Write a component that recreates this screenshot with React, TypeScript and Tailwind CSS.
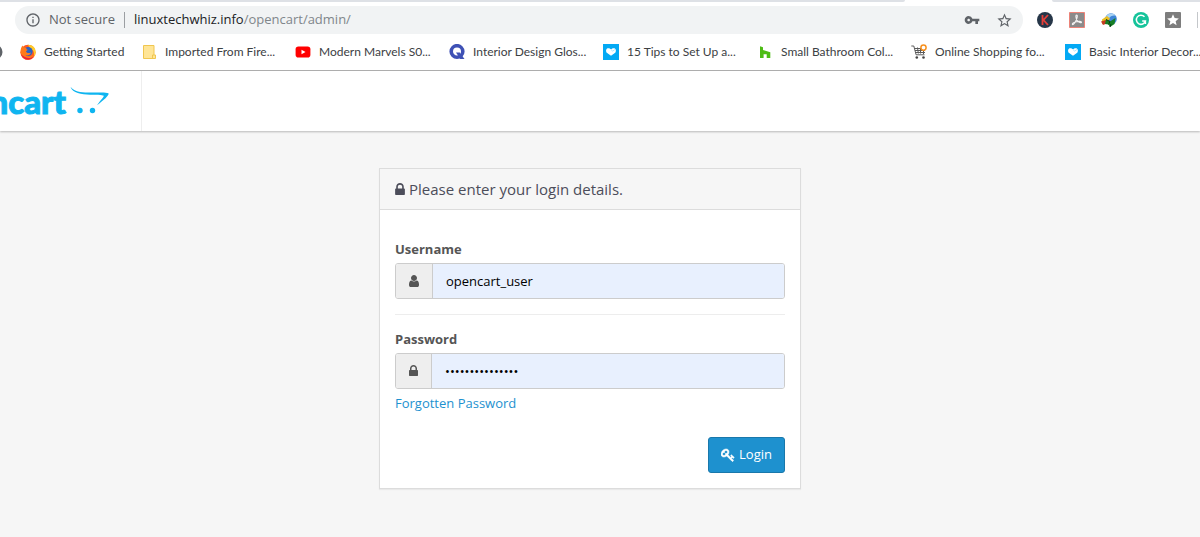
import { ReactNode } from "react";
import { MdInfoOutline, MdStar, MdStarBorder, MdVpnKey } from "react-icons/md";

interface Bookmark {
  label: string;
  icon: ReactNode;
}

function FirefoxIcon() {
  return (
    <svg viewBox="0 0 16 16" className="size-4">
      <circle cx="8" cy="8.3" r="7.6" fill="#ff5a1f" />
      <path d="M8 .8c5 0 7.8 3.400 7.700 7.500-.1 2-1 3.700-2 4.700 1-4-.2-7-3-8.500C9.500 3.500 8.500 2 8 .8Z" fill="#ffc928" />
      <circle cx="8" cy="7.500" r="4.600" fill="#2a62c4" />
      <path d="M.6 8C.5 5 1.300 3 2.500 1.500c.3 1 .8 1.500 1.500 2 1-.3 2 0 2.800.3C6 4.500 6 5.200 7.500 5.600c.3.800-.8 1.200-1.500 1.700.3 1.700 2.500 2.400 5 1.200-.7 2.700-3.500 3.500-5.700 2.600 2 2.300 6 2 8-.6C12 15 9 16 6.500 15.500 3 14.800.7 12 .6 8Z" fill="#ff7a1a" />
      <path d="M1 10c1 4 4.500 6 8 5.500 2-.3 3.800-1.500 4.800-3-3 2.200-8.800 2.500-12.800-2.500Z" fill="#e8203c" />
    </svg>
  );
}

function FolderIcon() {
  return (
    <svg viewBox="0 0 16 16" className="size-4">
      <path d="M2.500 1.500h10.500v9.500h1.500v3.500h-12Z" fill="#ffe596" stroke="#f0c64f" />
      <path d="M11.500 14v-3h1.500" fill="none" stroke="#f0c64f" />
    </svg>
  );
}

function YoutubeIcon() {
  return (
    <svg viewBox="0 0 16 16" className="size-4">
      <rect x=".6" y="2.500" width="14.800" height="11" rx="2.800" fill="#f00" />
      <path d="m6.500 5.700 4 2.300-4 2.300Z" fill="#fff" />
    </svg>
  );
}

function QIcon() {
  return (
    <svg viewBox="0 0 16 16" className="size-4">
      <circle cx="8" cy="7.500" r="5.800" fill="none" stroke="#3f51b5" strokeWidth="3.600" />
      <path d="M7 8.500h3.800L15.500 15h-4.300Z" fill="#3f51b5" />
    </svg>
  );
}

function HeartIcon() {
  return (
    <svg viewBox="0 0 16 16" className="size-4">
      <path d="M0 0h16v16H0Z" fill="#03a9f4" />
      <path d="M8 11.800 3.800 8.800C2.500 7 3 4.200 5.200 4.200c1.200 0 2 .4 2.800 1.100.8-.7 1.600-1.100 2.800-1.100 2.200 0 2.700 2.800 1.400 4.600Z" fill="#fff" />
      <path d="m8 5.600 1.700 1.500 2.100-1.500" fill="none" stroke="#8fd8fa" strokeWidth=".7" />
    </svg>
  );
}

function HouzzIcon() {
  return (
    <svg viewBox="0 0 16 16" className="size-4">
      <path d="M3 2.300 6 3.200v2.900l7.300 2.100v5.800H9.700v-3.700H6.600v3.700H3Z" fill="#4dbc15" />
    </svg>
  );
}

function CartIcon() {
  return (
    <svg viewBox="0 0 16 16" className="size-4">
      <path d="M.3 2h2.500l2.300 8.800h8.400M3.500 4.500h7M4 6.500h10M4.500 8.500h9.500M6.500 3.500l.8 6M9.500 4v5.500M12.500 7v3" fill="none" stroke="#5a5a5a" strokeWidth="1" />
      <circle cx="5.800" cy="13.500" r="1.300" fill="#444" />
      <circle cx="12.500" cy="13.500" r="1.300" fill="#444" />
      <circle cx="12.500" cy="3.600" r="2.600" fill="#fff" stroke="#f7901e" strokeWidth="1.500" />
    </svg>
  );
}

const bookmarks: Bookmark[] = [
  { label: "Imported From Fire...", icon: <FolderIcon /> },
  { label: "Modern Marvels S0...", icon: <YoutubeIcon /> },
  { label: "Interior Design Glos...", icon: <QIcon /> },
  { label: "15 Tips to Set Up a...", icon: <HeartIcon /> },
  { label: "Small Bathroom Col...", icon: <HouzzIcon /> },
  { label: "Online Shopping fo...", icon: <CartIcon /> },
  { label: "Basic Interior Decor...", icon: <HeartIcon /> },
];

function Extensions() {
  return (
    <div className="flex shrink-0 items-center gap-4">
      <button type="button" aria-label="Keywords extension">
        <svg viewBox="0 0 16 16" className="size-4">
          <circle cx="8" cy="8" r="8" fill="#263648" />
          <path d="M5.500 3v10M11 3 6.500 8l4.500 5" fill="none" stroke="#e5403a" strokeWidth="1.800" />
        </svg>
      </button>
      <button type="button" aria-label="PDF extension">
        <svg viewBox="0 0 16 16" className="size-4">
          <path d="M.5.5h15v15H.5Z" fill="#8b8b8b" stroke="#ec8378" />
          <path d="M7.500 3c1.500 0 .6 3-.5 5.500-1 2.200-2.500 4.500-3.500 4-.8-.8 1.500-2.300 4-2.800 2.300-.5 5-.5 5 .5s-2.800.3-4.300-1.500C6.800 6.500 6.500 3 7.500 3Z" fill="none" stroke="#f3f3f3" strokeWidth="1.100" />
        </svg>
      </button>
      <button type="button" aria-label="Download manager">
        <svg viewBox="0 0 16 16" className="size-4">
          <circle cx="10" cy="7" r="5.800" fill="#3f86d8" />
          <path d="M5 4.500C7 1 12 .5 14.500 3.500 12 3 9 4 7.500 7Z" fill="#a9d2f3" />
          <path d="M1 7.500 6 4l3 2.500-3 4.500-5 1Z" fill="#e9bd22" />
          <path d="M0 9.500 5 8l2 3-5 2Z" fill="#c43c24" />
          <path d="m5 7.500 4 2L14.500 6l-1 6-4.500 3-1.500-2.500L4 12Z" fill="#167f24" />
          <path d="m5 7.500 4 2-1.500 3M9 15l1-3" fill="none" stroke="#083d12" />
        </svg>
      </button>
      <button type="button" aria-label="Grammar checker">
        <svg viewBox="0 0 16 16" className="size-4">
          <circle cx="8" cy="8" r="8" fill="#15c39a" />
          <path d="M11.500 4.800A4.600 4.600 0 1 0 12.400 9H9.200M12.400 9v3" fill="none" stroke="#fff" strokeWidth="1.500" />
        </svg>
      </button>
      <button type="button" aria-label="Favourites" className="flex size-4 items-center justify-center rounded-[1px] bg-[#7d7d7d] text-white">
        <MdStar size={14} />
      </button>
      <span className="h-4 w-px bg-[#c4c7ca]" />
    </div>
  );
}

function BrowserBar() {
  return (
    <div className="overflow-hidden border-b border-[#b0b0b0] bg-white">
      {/* Bottom edge of the tab strip */}
      <div className="flex h-[2px] justify-between">
        <span className="w-[905px] rounded-br-xs bg-[#dee1e6]" />
        <span className="w-[148px] rounded-bl-xs bg-[#dee1e6]" />
      </div>

      <div className="flex items-center gap-[14px] pt-1 pr-[2px] pl-[15px]">
        <div className="flex h-7 min-w-0 flex-1 items-center rounded-full bg-[#f1f3f4] px-[10px] text-[#5f6368]">
          <MdInfoOutline size={16} className="shrink-0" />
          <span className="ml-2 text-[13px] whitespace-nowrap">Not secure</span>
          <span className="mx-[9px] h-4 w-px bg-[#9b9ea2]" />
          <span className="flex-1 text-[13px] whitespace-nowrap text-[#80868b]">
            <span className="text-[#202124]">linuxtechwhiz.info</span>/opencart/admin/
          </span>
          <button type="button" aria-label="Saved passwords">
            <MdVpnKey size={16} />
          </button>
          <button type="button" aria-label="Bookmark this page" className="ml-4">
            <MdStarBorder size={17} />
          </button>
        </div>
        <Extensions />
      </div>

      <nav className="flex h-9 items-center font-['Lato',sans-serif] text-[12px] text-[#3c4043]">
        <svg viewBox="0 0 3 16" className="h-4 w-[3px] shrink-0">
          <circle cx="-5" cy="8" r="7.500" fill="#5f6368" />
        </svg>
        <a href="#" className="ml-[17px] flex w-[121px] shrink-0 items-center gap-2 whitespace-nowrap">
          <FirefoxIcon />
          Getting Started
        </a>
        {bookmarks.map((bookmark) => (
          <a key={bookmark.label} href="#" className="flex w-[154px] shrink-0 items-center gap-2 whitespace-nowrap">
            {bookmark.icon}
            {bookmark.label}
          </a>
        ))}
      </nav>
    </div>
  );
}

function LockIcon({ className }: { className: string }) {
  return (
    <svg viewBox="320 128 1152 1536" fill="currentColor" className={className}>
      <path d="M640 768h512v-192q0-106-75-181t-181-75-181 75-75 181v192zm832 96v576q0 40-28 68t-68 28h-960q-40 0-68-28t-28-68v-576q0-40 28-68t68-28h32v-192q0-184 132-316t316-132 316 132 132 316v192h32q40 0 68 28t28 68z" />
    </svg>
  );
}

function UserIcon() {
  return (
    <svg viewBox="256 128 1280 1536" fill="currentColor" className="h-3 w-[10px]">
      <path d="M1536 1399q0 109-62.5 187t-150.500 78h-854q-88 0-150.500-78t-62.500-187q0-85 8.500-160.500t31.500-152 58.500-131 94-89 134.500-34.500q131 128 313 128t313-128q76 0 134.500 34.500t94 89 58.500 131 31.500 152 8.500 160.500zm-256-887q0 159-112.500 271.500t-271.500 112.500-271.500-112.500-112.500-271.500 112.500-271.500 271.500-112.500 271.500 112.500 112.500 271.500z" />
    </svg>
  );
}

function KeyIcon() {
  return (
    <svg viewBox="0 0 1792 1792" fill="currentColor" stroke="currentColor" strokeWidth="70" className="size-[14px]">
      <path d="M832 512q0-80-56-136t-136-56-136 56-56 136q0 42 19 83-41-19-83-19-80 0-136 56t-56 136 56 136 136 56 136-56 56-136q0-42-19-83 41 19 83 19 80 0 136-56t56-136zm851 704q0 17-49 66t-66 49q-9 0-28.500-16t-36.500-33-38.500-40-24.500-26l-96 96 220 220q28 28 28 68 0 42-39 81t-81 39q-40 0-68-28l-671-671q-176 131-365 131-163 0-265.500-102.500t-102.500-265.500q0-160 95-313t248-248 313-95q163 0 265.500 102.500t102.500 265.500q0 189-131 365l355 355 96-96q-3-3-26-24.500t-40-38.500-33-36.500-16-28.500q0-17 49-66t66-49q13 0 23 10 6 6 46 44.500t82 79.500 86.500 86 73 78 28.500 41z" />
    </svg>
  );
}

function Header() {
  return (
    <header className="flex h-[60px] bg-white shadow-[0_1px_2px_rgba(0,0,0,0.25)]">
      <a href="#" aria-label="opencart" className="flex w-[142px] items-center justify-end overflow-hidden border-r border-[#eeeeee] pr-[31px] text-[#0fb5f0]">
        <span className="font-['Lato',sans-serif] text-[33px] leading-[56px] font-black [-webkit-text-stroke:1px_#0fb5f0]">opencart</span>
        <svg viewBox="0 0 40 30" className="ml-1 h-[30px] w-10 shrink-0" fill="currentColor">
          <path d="M.5.800C5.500 7 13 6.700 24 6.500c6 0 12-.5 14.500.8 1 2-5 7-11.500 12 3.500-5 7-8.500 6.800-9.500-1.800-1-7.500-.8-13.800-1C11.500 8.400 2.500 7.500.5.800Z" />
          <circle cx="10" cy="24.500" r="2.700" />
          <circle cx="22.500" cy="24.500" r="2.700" />
        </svg>
      </a>
    </header>
  );
}

function LoginPanel() {
  return (
    <section className="w-full max-w-[422px] border border-[#dcdcdc] bg-white shadow-[0_1px_1px_rgba(0,0,0,0.05)]">
      <h1 className="flex h-[41px] items-center gap-1 border-b border-[#dcdcdc] bg-[#f6f6f6] px-[15px] text-[15px] text-[#4c4d5a]">
        <LockIcon className="h-[13px] w-[10px]" />
        Please enter your login details.
      </h1>
      <form className="flex flex-col px-[15px] pt-[29px] pb-[15px]" onSubmit={(e) => e.preventDefault()}>
        <label htmlFor="username" className="mb-1 leading-5 font-bold">Username</label>
        <div className="flex h-9 overflow-hidden rounded-[3px] border border-[#cccccc]">
          <span className="flex w-[37px] items-center justify-center border-r border-[#cccccc] bg-[#eeeeee]">
            <UserIcon />
          </span>
          <input id="username" type="text" defaultValue="opencart_user" className="min-w-0 flex-1 bg-[#e8f0fe] px-[13px] pt-px text-black outline-none" />
        </div>

        <hr className="mt-[15px] mb-[14px] border-[#ededed]" />

        <label htmlFor="password" className="mb-1 leading-5 font-bold">Password</label>
        <div className="flex h-9 overflow-hidden rounded-[3px] border border-[#cccccc]">
          <span className="flex w-9 items-center justify-center border-r border-[#cccccc] bg-[#eeeeee]">
            <LockIcon className="h-3 w-[9px]" />
          </span>
          <input id="password" type="password" defaultValue="opencartadmin15" className="min-w-0 flex-1 bg-[#e8f0fe] px-[13px] pt-px text-black outline-none" />
        </div>
        <a href="#" className="mt-1 self-start leading-5 text-[#1e91cf]">Forgotten Password</a>

        <button type="submit" className="mt-6 flex h-9 items-center gap-1 self-end rounded-[3px] border border-[#1978ab] bg-[#1e91cf] px-3 text-white">
          <KeyIcon />
          Login
        </button>
      </form>
    </section>
  );
}

export default function App() {
  return (
    <div className="flex min-h-screen flex-col bg-[#f6f6f6] font-['Open_Sans',sans-serif] text-[13px] text-[#555555]">
      <BrowserBar />
      <Header />
      <main className="flex justify-center pt-[37px] pr-5 pb-12">
        <LoginPanel />
      </main>
    </div>
  );
}
